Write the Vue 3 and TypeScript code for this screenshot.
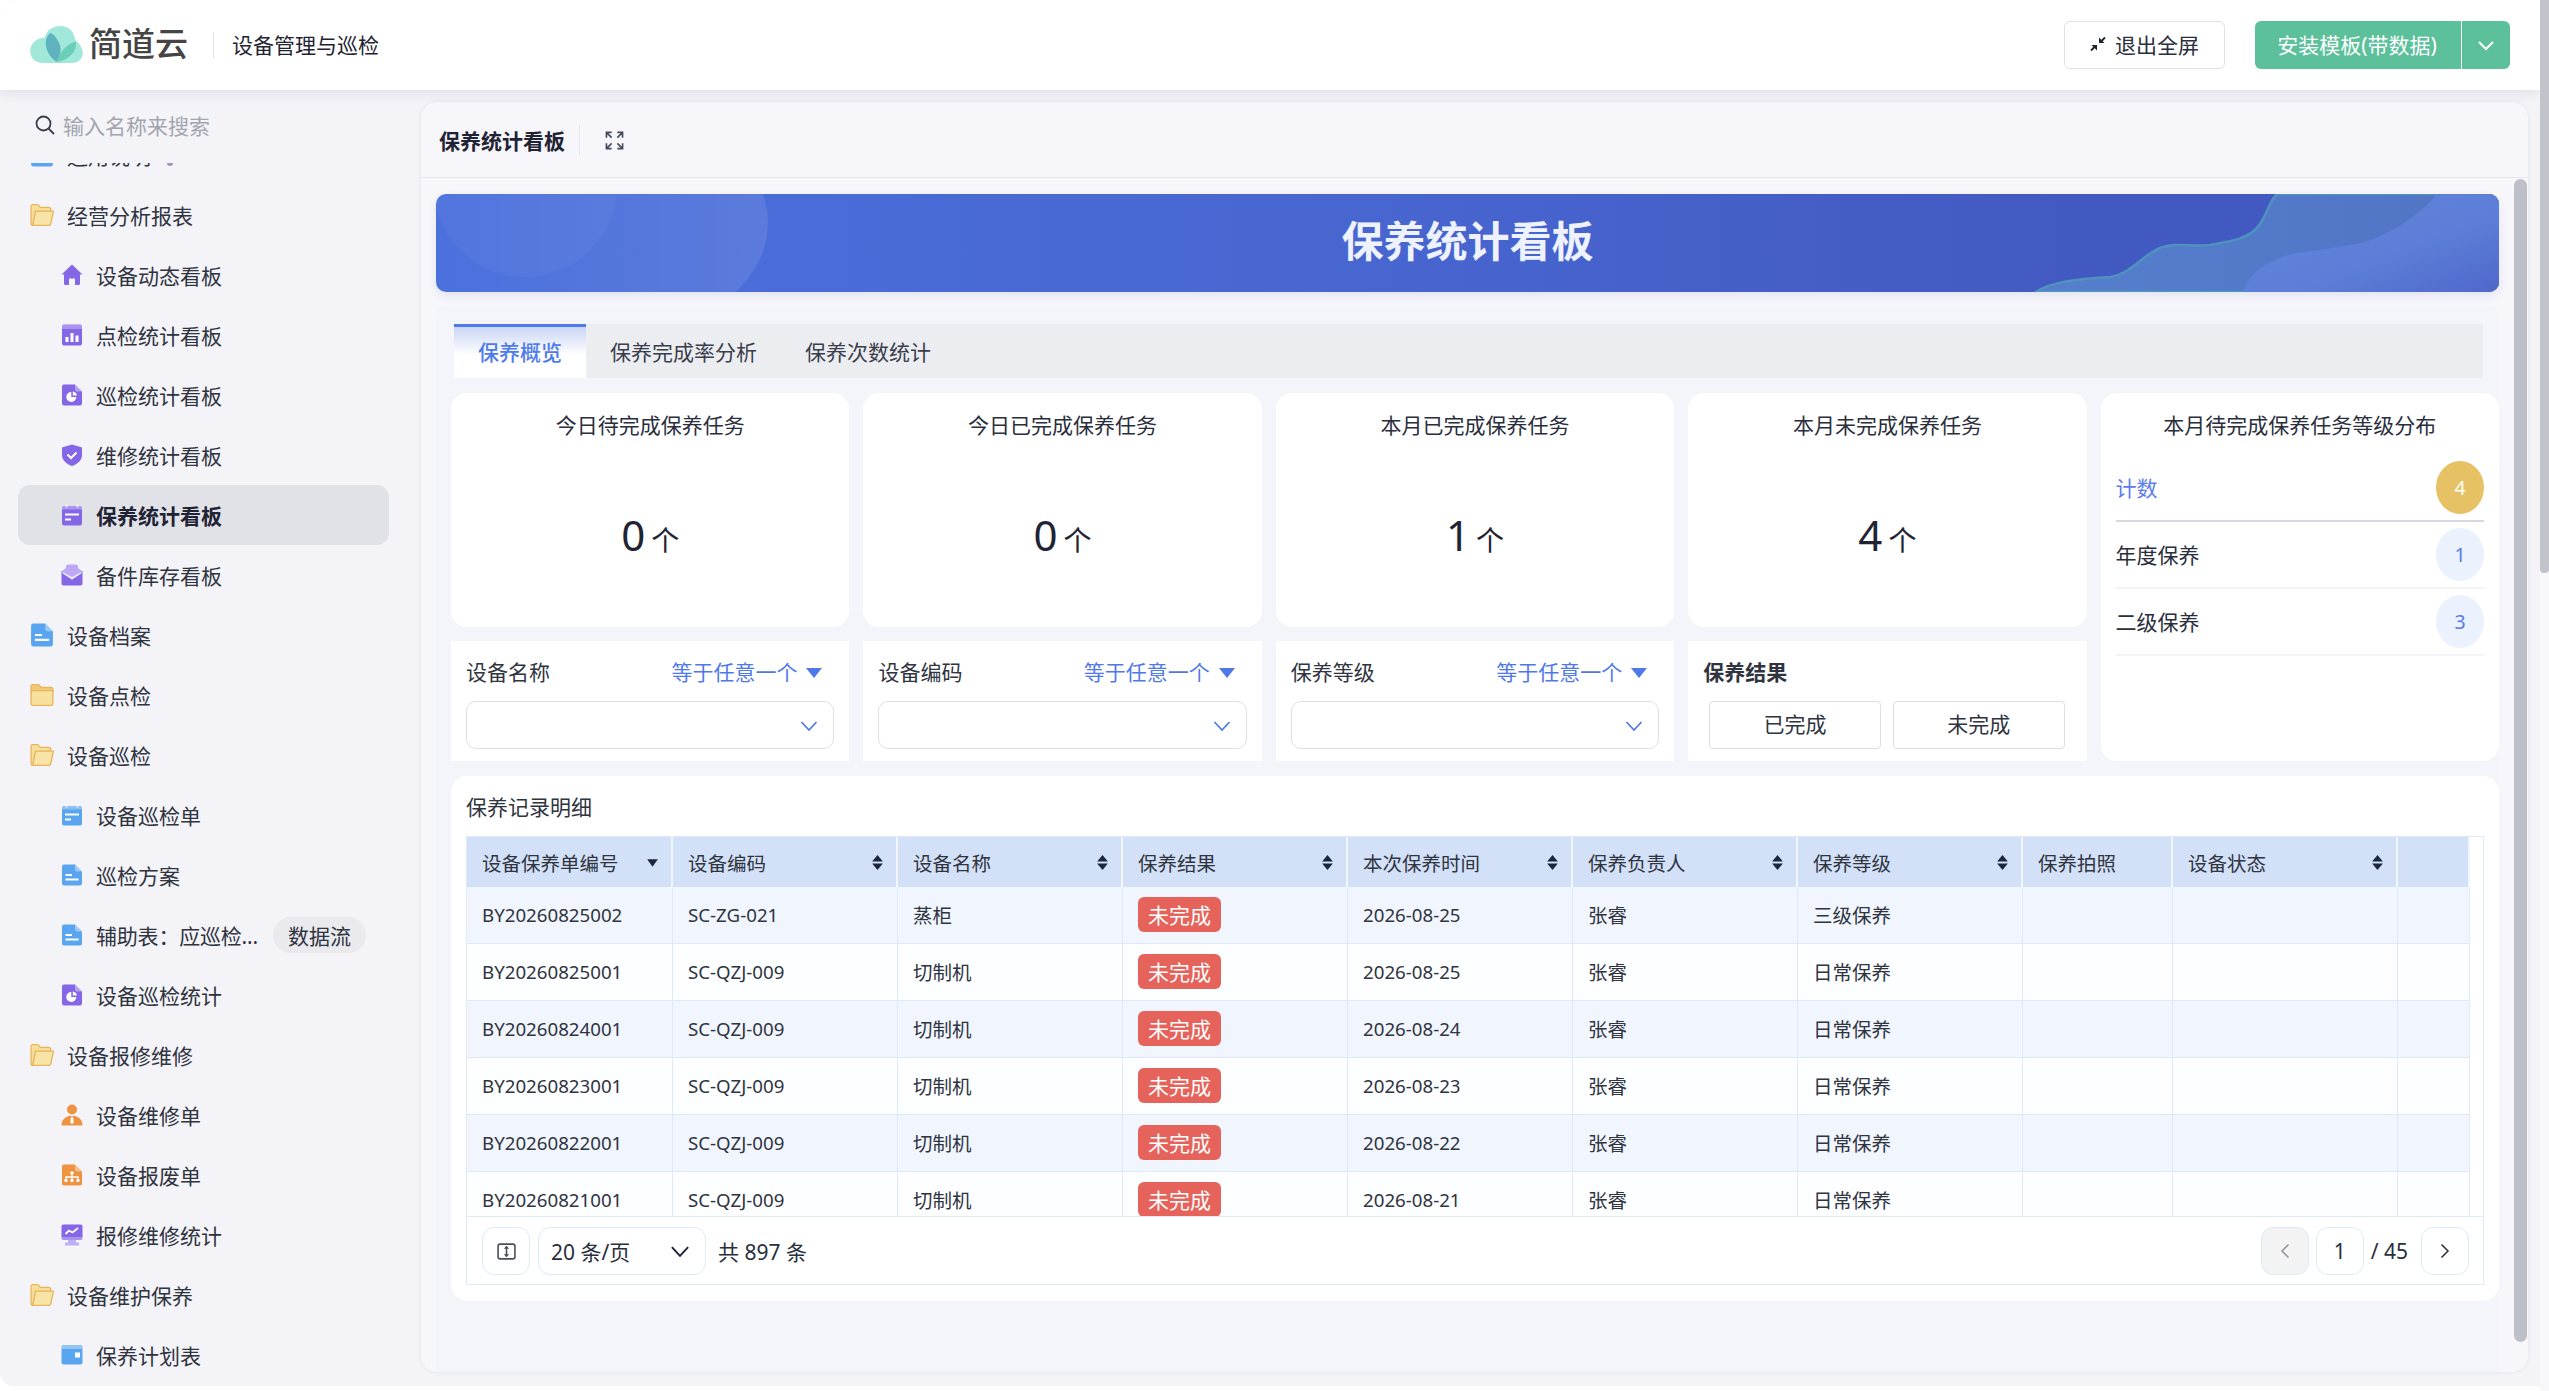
<template>
  <div class="app">
    <div class="shell">
      <header class="topbar">
        <div class="brand">
          <svg class="brand__logo" viewBox="0 0 54 40" aria-hidden="true">
            <path d="M13 39C5 39 0 33.500 0 27C0 19 6 13 15 13C17 5 23 1 31 1C39 1 45 6 46 15C50 18 54 23 54 29C54 35 49 39 43 39Z" fill="#a2e8da" />
            <path d="M27 38C20 33 16 26 16 18C16 14 18 10 21 8C26 11 29 16 31 22C32 28 30 33 27 38Z" fill="#5eb3be" />
            <path d="M28 38C30 29 36 20 47 17C48 27 41 35 28 38Z" fill="#69cfb6" />
          </svg>
          <span class="brand__name">简道云</span>
          <span class="brand__sep"></span>
          <span class="brand__app">设备管理与巡检</span>
        </div>
        <div class="topbar__actions">
          <button type="button" class="exit-btn">
            <svg viewBox="0 0 16 16" class="exit-btn__icon" aria-hidden="true">
              <path d="M15 1.500 10.500 6" stroke="#1f2333" stroke-width="1.800" fill="none" />
              <path d="M9 1.500V7H14.500Z" fill="#1f2333" />
              <path d="M1 14.500 5.500 10" stroke="#1f2333" stroke-width="1.800" fill="none" />
              <path d="M7 14.500V9H1.500Z" fill="#1f2333" />
            </svg>
            退出全屏
          </button>
          <div class="install">
            <button type="button" class="install__main">安装模板(带数据)</button>
            <button type="button" class="install__more">
              <svg viewBox="0 0 18 12" class="install__chev" aria-hidden="true">
                <path d="M2 2.500 9 9.500 16 2.500" fill="none" stroke="#fff" stroke-width="2" />
              </svg>
            </button>
          </div>
        </div>
      </header>

      <div class="layout">
        <aside class="sidebar">
          <div class="search">
            <svg viewBox="0 0 20 20" class="search__icon" aria-hidden="true">
              <circle cx="8.500" cy="8.500" r="7" fill="none" stroke="#3b3f4c" stroke-width="1.800" />
              <path d="M13.500 13.500 19 19" stroke="#3b3f4c" stroke-width="1.800" />
            </svg>
            <span class="search__text">输入名称来搜索</span>
          </div>
          <nav class="nav">
            <div class="nav__list">
              <div
                v-for="item in navItems"
                :key="item.label"
                class="nav__row"
                :class="{ 'nav__row--child': item.child, 'nav__row--active': item.active }"
              >
                <svg
                  class="nav__icon"
                  :class="`nav__icon--${item.tone}`"
                  viewBox="0 0 22 22"
                  aria-hidden="true"
                  v-html="icons[item.icon]"
                ></svg>
                <span class="nav__label" :class="{ 'nav__label--fixed': item.tag }">{{ item.label }}</span>
                <span v-if="item.dot" class="nav__dot"></span>
                <span v-if="item.tag" class="nav__tag">{{ item.tag }}</span>
              </div>
            </div>
          </nav>
        </aside>

        <main class="panel">
          <div class="panel__title">
            <span class="panel__name">保养统计看板</span>
            <span class="panel__sep"></span>
            <svg viewBox="0 0 20 20" class="panel__expand" aria-hidden="true">
              <path
                d="M7 1.500H1.500V7M1.500 1.500 7 7M13 1.500H18.500V7M18.500 1.500 13 7M7 18.500H1.500V13M1.500 18.500 7 13M13 18.500H18.500V13M18.500 18.500 13 13"
                fill="none"
                stroke="#444a5a"
                stroke-width="1.700"
              />
            </svg>
          </div>

          <div class="panel__body">
            <div class="banner">
              <svg class="banner__art" viewBox="0 0 2063 98" preserveAspectRatio="none" aria-hidden="true">
                <defs>
                  <linearGradient id="fade" x1="0" x2="1" y1="0" y2="0">
                    <stop offset="0" stop-color="#fff" stop-opacity="0" />
                    <stop offset="1" stop-color="#fff" stop-opacity="0.1" />
                  </linearGradient>
                  <linearGradient id="wave-a" x1="0" x2="1" y1="0" y2="0">
                    <stop offset="0" stop-color="#557fcc" />
                    <stop offset="1" stop-color="#5074c4" />
                  </linearGradient>
                  <linearGradient id="wave-b" x1="0" x2="1" y1="0" y2="1">
                    <stop offset="0" stop-color="#6286da" />
                    <stop offset="0.6" stop-color="#5c7ed8" />
                    <stop offset="1" stop-color="#4f68ca" />
                  </linearGradient>
                </defs>
                <ellipse cx="154" cy="29" rx="178" ry="120" fill="url(#fade)" />
                <circle cx="89" cy="-9" r="92" fill="#fff" fill-opacity="0.035" />
                <path
                  d="M1600 98C1615 88 1640 85 1674 83C1695 80 1705 62 1724 54C1740 48 1755 53 1774 51C1795 47 1810 45 1820 35C1832 22 1832 8 1841 0L2063 0L2063 98Z"
                  fill="url(#wave-a)"
                  stroke="#4f92c0"
                  stroke-width="2.500"
                />
                <path
                  d="M1808 98C1812 85 1818 74 1846 63C1870 56 1880 57 1896 54C1915 51 1930 49 1942 43C1960 35 1985 20 2001 0L2063 0L2063 98Z"
                  fill="url(#wave-b)"
                />
              </svg>
              <span class="banner__title">保养统计看板</span>
            </div>

            <section class="board">
              <div class="tabs">
                <div
                  v-for="(tab, i) in tabs"
                  :key="tab"
                  class="tabs__item"
                  :class="{ 'tabs__item--active': i === 0 }"
                >
                  {{ tab }}
                </div>
              </div>

              <div class="grid">
                <div v-for="stat in stats" :key="stat.title" class="stat">
                  <div class="stat__title">{{ stat.title }}</div>
                  <div class="stat__value">
                    <span class="stat__num">{{ stat.value }}</span>
                    <span class="stat__unit">个</span>
                  </div>
                </div>

                <div class="levels">
                  <div class="stat__title">本月待完成保养任务等级分布</div>
                  <div class="levels__list">
                    <div
                      v-for="(level, i) in levels"
                      :key="level.name"
                      class="levels__row"
                      :class="{ 'levels__row--head': i === 0 }"
                    >
                      <span class="levels__name">{{ level.name }}</span>
                      <span class="levels__count">{{ level.count }}</span>
                    </div>
                  </div>
                </div>

                <div v-for="name in filters" :key="name" class="filter">
                  <div class="filter__head">
                    <span>{{ name }}</span>
                    <span class="filter__mode">
                      等于任意一个
                      <svg viewBox="0 0 16 12" class="filter__caret" aria-hidden="true">
                        <path d="M0 1H16L8 11Z" fill="#4f79ea" />
                      </svg>
                    </span>
                  </div>
                  <div class="filter__input">
                    <svg viewBox="0 0 18 12" class="filter__chev" aria-hidden="true">
                      <path d="M1.500 2 9 10 16.500 2" fill="none" stroke="#4f79ea" stroke-width="1.700" />
                    </svg>
                  </div>
                </div>

                <div class="filter">
                  <div class="filter__head filter__head--bold">保养结果</div>
                  <div class="filter__options">
                    <button type="button" class="filter__option">已完成</button>
                    <button type="button" class="filter__option">未完成</button>
                  </div>
                </div>
              </div>

              <div class="records">
                <div class="records__title">保养记录明细</div>
                <div class="table-box">
                  <div class="table-wrap">
                    <table class="table">
                      <colgroup>
                        <col v-for="col in columns" :key="col.title" :class="`col-${col.width}`" />
                        <col class="col-end" />
                      </colgroup>
                      <thead>
                        <tr>
                          <th v-for="col in columns" :key="col.title">
                            <div class="table__head">
                              <span>{{ col.title }}</span>
                              <svg v-if="col.sort" viewBox="0 0 10 14" class="table__sort" aria-hidden="true">
                                <path v-if="col.sort === 'both'" d="M5 0 10 6H0Z" fill="#1d2540" />
                                <path v-if="col.sort === 'both'" d="M5 14 10 8H0Z" fill="#1d2540" />
                                <path v-if="col.sort === 'down'" d="M5 11 10 4H0Z" fill="#1d2540" />
                              </svg>
                            </div>
                          </th>
                          <th></th>
                        </tr>
                      </thead>
                      <tbody>
                        <tr v-for="row in rows" :key="row.no">
                          <td class="table__latin">{{ row.no }}</td>
                          <td class="table__latin">{{ row.code }}</td>
                          <td>{{ row.name }}</td>
                          <td><span class="badge">未完成</span></td>
                          <td class="table__latin">{{ row.date }}</td>
                          <td>张睿</td>
                          <td>{{ row.level }}</td>
                          <td></td>
                          <td></td>
                          <td></td>
                        </tr>
                      </tbody>
                    </table>
                  </div>
                  <div class="pager">
                    <div class="pager__left">
                      <span class="pager__btn">
                        <svg viewBox="0 0 18 18" class="pager__density" aria-hidden="true">
                          <rect x="1" y="2" width="16" height="14" rx="2" fill="none" stroke="#4a4f5e" stroke-width="1.500" />
                          <path d="M9 4.500V13.500" stroke="#4a4f5e" stroke-width="1.500" />
                          <path d="M9 3.500 11.500 6.500H6.500ZM9 14.500 11.500 11.500H6.500Z" fill="#4a4f5e" />
                        </svg>
                      </span>
                      <span class="pager__size">
                        20 条/页
                        <svg viewBox="0 0 18 12" class="pager__chev" aria-hidden="true">
                          <path d="M1.500 2 9 10 16.500 2" fill="none" stroke="#1f2333" stroke-width="1.800" />
                        </svg>
                      </span>
                      <span class="pager__total">共 897 条</span>
                    </div>
                    <div class="pager__right">
                      <span class="pager__btn pager__btn--off">
                        <svg viewBox="0 0 10 16" class="pager__arrow" aria-hidden="true">
                          <path d="M8.500 1.500 2 8 8.500 14.500" fill="none" stroke="#8f929a" stroke-width="1.500" />
                        </svg>
                      </span>
                      <span class="pager__btn">1</span>
                      <span class="pager__count">/ 45</span>
                      <span class="pager__btn pager__btn--next">
                        <svg viewBox="0 0 10 16" class="pager__arrow" aria-hidden="true">
                          <path d="M1.500 1.500 8 8 1.500 14.500" fill="none" stroke="#2b2f3c" stroke-width="1.500" />
                        </svg>
                      </span>
                    </div>
                  </div>
                </div>
              </div>
            </section>
          </div>
          <span class="panel__thumb"></span>
        </main>
      </div>
    </div>
    <div class="page-bar"><span class="page-bar__thumb"></span></div>
  </div>
</template>

<script setup lang="ts">
type Tone = "folder" | "purple" | "blue" | "orange";

interface NavItem {
  label: string;
  icon: string;
  tone: Tone;
  child?: boolean;
  active?: boolean;
  tag?: string;
  dot?: boolean;
}

interface Column {
  title: string;
  width: number;
  sort?: "both" | "down";
}

// 文档形状，几个图标共用
const doc =
  '<path fill="currentColor" d="M3 .5H14L21 7.500V19.500A2 2 0 0 1 19 21.500H3A2 2 0 0 1 1 19.500V2.500A2 2 0 0 1 3 .5Z"/><path fill="#fff" fill-opacity=".4" d="M14 .5 21 7.500H16A2 2 0 0 1 14 5.500Z"/>';

const icons: Record<string, string> = {
  folderOpen:
    '<path fill="#f6df9b" stroke="#e8b55c" stroke-width="1.200" d="M1 19V3A1.500 1.500 0 0 1 2.500 1.500H7L9.500 4H17A2 2 0 0 1 19 6V8H5.500L2.500 20.500H2.200A1.200 1.200 0 0 1 1 19Z"/><path fill="#f8e4a6" stroke="#e8b55c" stroke-width="1.200" d="M5 7.500H21.500L19 19A2 2 0 0 1 17 20.500H2.500Z"/>',
  folder:
    '<path fill="#efc878" stroke="#e8b55c" stroke-width="1.200" d="M1 6V3A1.500 1.500 0 0 1 2.500 1.500H8L10.500 4H19.500A1.500 1.500 0 0 1 21 5.500V8H1Z"/><path fill="#f7e09c" stroke="#e8b55c" stroke-width="1.200" d="M1 7H21V19A1.500 1.500 0 0 1 19.500 20.500H2.500A1.500 1.500 0 0 1 1 19Z"/>',
  home: '<path fill="currentColor" d="M11 .5 21.500 10.500H19V19.500A1.500 1.500 0 0 1 17.500 21H14V14.500H8V21H4.500A1.500 1.500 0 0 1 3 19.500V10.500H.5Z"/>',
  chart:
    '<rect x="1" y=".5" width="20" height="21" rx="2" fill="currentColor"/><path fill="#fff" fill-opacity=".3" d="M3 .5H19A2 2 0 0 1 21 2.500V5H1V2.500A2 2 0 0 1 3 .5Z"/><path fill="#fff" d="M4.500 13H7.500V18H4.500ZM9.500 9H12.500V18H9.500ZM14.500 11.500H17.500V18H14.500Z"/>',
  pie:
    doc +
    '<path fill="#fff" d="M10.300 8V13H15.300A5 5 0 1 1 10.300 8Z"/><path fill="#fff" d="M11.800 7.500A5 5 0 0 1 16 11.500H11.800Z"/>',
  shield:
    '<path fill="currentColor" d="M11 .5 21 3.500V11C21 16.500 16.500 20 11 22C5.500 20 1 16.500 1 11V3.500Z"/><path fill="none" stroke="#fff" stroke-width="2" d="M6.500 10.500 10 14 15.500 8.500"/>',
  calendar:
    '<rect x="1" y="2" width="20" height="19.500" rx="2" fill="currentColor"/><path fill="#fff" fill-opacity=".3" d="M3 2H19A2 2 0 0 1 21 4V5.500H1V4A2 2 0 0 1 3 2Z"/><path fill="#fff" fill-opacity=".55" d="M4.500 0H6.500V4H4.500ZM15.500 0H17.500V4H15.500Z"/><path fill="#fff" d="M4 9.500H18V11.500H4ZM4 14.500H10V16.500H4Z"/>',
  box:
    '<path fill="#bda8f5" d="M7 .5H15A2 2 0 0 1 17 2.500V4L21.500 7.500 11 13 .5 7.500 5 4V2.500A2 2 0 0 1 7 .5Z"/><path fill="currentColor" d="M.5 7 11 14 21.500 7V19.500A2 2 0 0 1 19.500 21.500H2.500A2 2 0 0 1 .5 19.500Z"/><path fill="none" stroke="#fff" stroke-width="1.300" d="M1.500 8.500 11 14.800 20.500 8.500"/>',
  doc: doc + '<path fill="#fff" d="M4.500 10H11V12H4.500ZM4.500 14.500H17.500V16.500H4.500Z"/>',
  person:
    '<circle cx="11" cy="5.500" r="5" fill="currentColor"/><path fill="currentColor" d="M.5 21.500C.5 16 4 13 8 12H14C18 13 21.500 16 21.500 21.500Z"/><path fill="#fff" d="M10 13H12L12.800 18.500 11 20 9.200 18.500Z"/>',
  org:
    doc +
    '<circle cx="11" cy="9" r="1.800" fill="#fff"/><path fill="none" stroke="#fff" stroke-width="1.300" d="M11 10V16M5 16V13H17V16"/><circle cx="5" cy="16.500" r="1.700" fill="#fff"/><circle cx="11" cy="16.500" r="1.700" fill="#fff"/><circle cx="17" cy="16.500" r="1.700" fill="#fff"/>',
  monitor:
    '<path fill="#c0aef6" d="M7 15H15V18.500H18V21.500H4V18.500H7Z"/><rect x=".5" y=".5" width="21" height="15.500" rx="2" fill="currentColor"/><path fill="#fff" fill-opacity=".3" d="M.5 13H21.500V14A2 2 0 0 1 19.500 16H2.500A2 2 0 0 1 .5 14Z"/><path fill="none" stroke="#fff" stroke-width="1.800" d="M4.500 10 8 6.500 11.500 8.500 17 4"/>',
  card:
    '<rect x=".5" y="1" width="21" height="19.500" rx="2" fill="currentColor"/><path fill="#fff" fill-opacity=".35" d="M2.500 1H19.500A2 2 0 0 1 21.500 3V5H.5V3A2 2 0 0 1 2.500 1Z"/><rect x="14" y="8.500" width="5" height="5" fill="#fff"/>',
};

const navItems: NavItem[] = [
  { label: "运用说明", icon: "doc", tone: "blue", dot: true },
  { label: "经营分析报表", icon: "folderOpen", tone: "folder" },
  { label: "设备动态看板", icon: "home", tone: "purple", child: true },
  { label: "点检统计看板", icon: "chart", tone: "purple", child: true },
  { label: "巡检统计看板", icon: "pie", tone: "purple", child: true },
  { label: "维修统计看板", icon: "shield", tone: "purple", child: true },
  { label: "保养统计看板", icon: "calendar", tone: "purple", child: true, active: true },
  { label: "备件库存看板", icon: "box", tone: "purple", child: true },
  { label: "设备档案", icon: "doc", tone: "blue" },
  { label: "设备点检", icon: "folder", tone: "folder" },
  { label: "设备巡检", icon: "folderOpen", tone: "folder" },
  { label: "设备巡检单", icon: "calendar", tone: "blue", child: true },
  { label: "巡检方案", icon: "doc", tone: "blue", child: true },
  { label: "辅助表：应巡检...", icon: "doc", tone: "blue", child: true, tag: "数据流" },
  { label: "设备巡检统计", icon: "pie", tone: "purple", child: true },
  { label: "设备报修维修", icon: "folderOpen", tone: "folder" },
  { label: "设备维修单", icon: "person", tone: "orange", child: true },
  { label: "设备报废单", icon: "org", tone: "orange", child: true },
  { label: "报修维修统计", icon: "monitor", tone: "purple", child: true },
  { label: "设备维护保养", icon: "folderOpen", tone: "folder" },
  { label: "保养计划表", icon: "card", tone: "blue", child: true },
];

const tabs = ["保养概览", "保养完成率分析", "保养次数统计"];

const stats = [
  { title: "今日待完成保养任务", value: 0 },
  { title: "今日已完成保养任务", value: 0 },
  { title: "本月已完成保养任务", value: 1 },
  { title: "本月未完成保养任务", value: 4 },
];

const levels = [
  { name: "计数", count: 4 },
  { name: "年度保养", count: 1 },
  { name: "二级保养", count: 3 },
];

const filters = ["设备名称", "设备编码", "保养等级"];

const columns: Column[] = [
  { title: "设备保养单编号", width: 206, sort: "down" },
  { title: "设备编码", width: 225, sort: "both" },
  { title: "设备名称", width: 225, sort: "both" },
  { title: "保养结果", width: 225, sort: "both" },
  { title: "本次保养时间", width: 225, sort: "both" },
  { title: "保养负责人", width: 225, sort: "both" },
  { title: "保养等级", width: 225, sort: "both" },
  { title: "保养拍照", width: 150 },
  { title: "设备状态", width: 225, sort: "both" },
];

const rows = [
  { no: "BY20260825002", code: "SC-ZG-021", name: "蒸柜", date: "2026-08-25", level: "三级保养" },
  { no: "BY20260825001", code: "SC-QZJ-009", name: "切制机", date: "2026-08-25", level: "日常保养" },
  { no: "BY20260824001", code: "SC-QZJ-009", name: "切制机", date: "2026-08-24", level: "日常保养" },
  { no: "BY20260823001", code: "SC-QZJ-009", name: "切制机", date: "2026-08-23", level: "日常保养" },
  { no: "BY20260822001", code: "SC-QZJ-009", name: "切制机", date: "2026-08-22", level: "日常保养" },
  { no: "BY20260821001", code: "SC-QZJ-009", name: "切制机", date: "2026-08-21", level: "日常保养" },
];
</script>

<style>
html,
body {
  margin: 0;
  background: #fff;
}
</style>

<style scoped>
.app {
  width: 2549px;
  height: 1391px;
  display: flex;
  overflow: hidden;
  background: #fff;
  color: #2a2e3d;
  font-family: "Noto Sans", "Noto Sans CJK SC", sans-serif;
  font-size: 21px;
}

.shell {
  width: 2540px;
  height: 1386px;
  display: flex;
  flex-direction: column;
  background: #f3f3f8;
  border-radius: 14px 0 0 14px;
  overflow: hidden;
}

/* 右侧页面滚动条 */
.page-bar {
  width: 9px;
  height: 1391px;
  background: #f8f8fa;
}

.page-bar__thumb {
  display: block;
  height: 573px;
  background: #c1c3cb;
  border-radius: 0 0 4px 4px;
}

/* 顶栏 */
.topbar {
  height: 90px;
  flex: none;
  display: flex;
  align-items: center;
  justify-content: space-between;
  padding: 0 30px 0 30px;
  background: #fff;
  box-shadow: 0 2px 14px rgba(30, 35, 60, 0.1);
  position: relative;
  z-index: 2;
}

.brand {
  display: flex;
  align-items: center;
}

.brand__logo {
  width: 53px;
  height: 39px;
  margin-top: -1px;
}

.brand__name {
  margin-left: 6px;
  width: 104px;
  font-size: 33px;
  line-height: 40px;
  font-weight: 500;
  color: #454545;
  padding-bottom: 2px;
}

.brand__sep {
  width: 1px;
  height: 26px;
  margin: 0 18px 0 20px;
  background: #e4e4e8;
}

.brand__app {
  color: #1f2333;
  padding-bottom: 3px;
}

.topbar__actions {
  display: flex;
  align-items: center;
  gap: 30px;
}

.exit-btn {
  width: 161px;
  height: 48px;
  display: flex;
  align-items: center;
  justify-content: center;
  gap: 9px;
  padding: 0 0 3px;
  background: #fff;
  border: 1px solid #e1e1e6;
  border-radius: 6px;
  color: #2a2e3d;
  font: inherit;
}

.exit-btn__icon {
  width: 16px;
  height: 16px;
}

.install {
  display: flex;
  height: 48px;
  border-radius: 6px;
  overflow: hidden;
  background: #5cc09b;
}

.install__main,
.install__more {
  border: none;
  background: transparent;
  color: #fff;
  font: inherit;
  padding: 0;
}

.install__main {
  width: 206px;
  padding: 0 2px 2px 0;
}

.install__more {
  width: 49px;
  border-left: 1px solid #fff;
  display: flex;
  align-items: center;
  justify-content: center;
}

.install__chev {
  width: 18px;
  height: 13px;
}

.layout {
  flex: 1;
  display: flex;
  min-height: 0;
}

/* 侧栏 */
.sidebar {
  width: 421px;
  flex: none;
  display: flex;
  flex-direction: column;
  min-height: 0;
}

.search {
  height: 73px;
  flex: none;
  box-sizing: border-box;
  display: flex;
  align-items: center;
  gap: 8px;
  padding: 0 0 4px 35px;
}

.search__icon {
  width: 20px;
  height: 20px;
}

.search__text {
  color: #a3a5ae;
}

.nav {
  flex: 1;
  overflow: hidden;
  min-height: 0;
}

.nav__list {
  margin-top: -38px;
}

.nav__row {
  height: 60px;
  display: flex;
  align-items: center;
  margin: 0 32px 0 18px;
  padding-left: 12px;
  border-radius: 12px;
  color: #30343f;
}

.nav__row--child {
  padding-left: 43px;
}

.nav__row--active {
  background: #e1e2e8;
  font-weight: 700;
  color: #1f2333;
}

.nav__icon {
  width: 24px;
  height: 24px;
  flex: none;
  margin-right: 13px;
}

.nav__row--child .nav__icon {
  width: 22px;
  height: 22px;
  margin-right: 13px;
}

.nav__icon--purple {
  color: #8566e6;
}

.nav__icon--blue {
  color: #5aa5f0;
}

.nav__icon--orange {
  color: #ee9440;
}

.nav__label {
  white-space: nowrap;
  padding-bottom: 1px;
}

.nav__label--fixed {
  width: 162px;
  letter-spacing: -0.2px;
}

.nav__dot {
  width: 6px;
  height: 10px;
  margin: 12px 0 0 16px;
  background: #a98fb5;
  border-radius: 3px;
}

.nav__tag {
  margin-left: 15px;
  width: 93px;
  height: 36px;
  display: flex;
  align-items: center;
  justify-content: center;
  background: #e9e9ee;
  border-radius: 18px;
}

/* 主面板 */
.panel {
  position: relative;
  width: 2107px;
  height: 1270px;
  margin-top: 12px;
  display: flex;
  flex-direction: column;
  background: #f6f6fb;
  border-radius: 16px;
  box-shadow: 0 0 4px rgba(30, 35, 60, 0.08);
  overflow: hidden;
}

.panel__title {
  height: 76px;
  flex: none;
  box-sizing: border-box;
  display: flex;
  align-items: center;
  padding-left: 18px;
  border-bottom: 1px solid #e6e6ec;
}

.panel__name {
  font-weight: 700;
  color: #1f2333;
}

.panel__sep {
  width: 1px;
  height: 30px;
  margin: 0 25px 0 14px;
  background: #e6e6ec;
}

.panel__expand {
  width: 19px;
  height: 19px;
  margin-top: 2px;
}

.panel__thumb {
  position: absolute;
  top: 77px;
  left: 2093px;
  width: 13px;
  height: 1163px;
  background: #bec0c9;
  border-radius: 7px;
}

.panel__body {
  flex: 1;
  min-height: 0;
  padding: 16px 0 0 15px;
}

.banner {
  position: relative;
  width: 2063px;
  height: 98px;
  border-radius: 10px;
  overflow: hidden;
  display: flex;
  align-items: center;
  justify-content: center;
  background: linear-gradient(90deg, #4a70dd 0%, #4866d0 45%, #4359c2 80%);
  box-shadow: 0 4px 10px rgba(60, 80, 160, 0.1);
}

.banner__art {
  position: absolute;
  inset: 0;
  width: 100%;
  height: 100%;
}

.banner__title {
  position: relative;
  padding-bottom: 10px;
  color: #eef2ff;
  font-size: 42px;
  font-weight: 700;
  letter-spacing: 0;
}

.board {
  width: 2063px;
  height: 1080px;
  margin-top: 14px;
  box-sizing: border-box;
  padding: 18px 0 0 15px;
  background: #f4f5fa;
  border-radius: 10px 10px 0 0;
}

.tabs {
  width: 2029px;
  height: 54px;
  margin-left: 3px;
  display: flex;
  background: #ecedf1;
}

.tabs__item {
  box-sizing: border-box;
  height: 54px;
  padding: 0 24px 1px;
  display: flex;
  align-items: center;
  color: #3a3e4c;
}

.tabs__item--active {
  border-top: 3px solid #4f7bea;
  padding-bottom: 4px;
  background: linear-gradient(180deg, #c9d6f6 0%, #fff 55%);
  color: #4f7bea;
  font-weight: 500;
}

.grid {
  width: 2048px;
  margin-top: 15px;
  display: grid;
  grid-template-columns: repeat(5, 1fr);
  grid-template-rows: 234px 120px;
  gap: 14px;
}

.stat {
  background: #fff;
  border-radius: 16px;
  display: flex;
  flex-direction: column;
  align-items: center;
}

.stat__title {
  margin-top: 16px;
  line-height: 32px;
  text-align: center;
  color: #2a2e3d;
}

.stat__value {
  margin-top: 60px;
  display: flex;
  align-items: baseline;
  gap: 6px;
  color: #1f2333;
}

.stat__num {
  font-size: 42px;
  line-height: 68px;
}

.stat__unit {
  font-size: 28px;
}

.levels {
  grid-column: 5;
  grid-row: 1 / span 2;
  background: #fff;
  border-radius: 16px;
}

.levels__list {
  margin: 14px 15px 0 15px;
}

.levels__row {
  height: 67px;
  box-sizing: border-box;
  display: flex;
  align-items: center;
  justify-content: space-between;
  border-bottom: 2px solid #f4f4f7;
}

.levels__row--head {
  border-bottom-color: #d8d8e0;
  color: #4f7bea;
}

.levels__name {
  padding-bottom: 2px;
}

.levels__row--head .levels__name {
  color: #5a7cf0;
}

.levels__count {
  width: 48px;
  height: 53px;
  border-radius: 50%;
  display: flex;
  align-items: center;
  justify-content: center;
  background: #ecf1fe;
  color: #5a7ae8;
  font-size: 19.500px;
}

.levels__row--head .levels__count {
  background: #e6c265;
  color: #fff;
}

.filter {
  background: #fff;
  padding: 0 15px 0 15px;
}

.filter__head {
  height: 60px;
  display: flex;
  align-items: center;
  justify-content: space-between;
  color: #30343f;
}

.filter__head--bold {
  font-weight: 700;
}

.filter__mode {
  display: flex;
  align-items: center;
  gap: 9px;
  padding-right: 12px;
  color: #4f79ea;
}

.filter__caret {
  width: 16px;
  height: 12px;
  margin-top: 3px;
}

.filter__input {
  box-sizing: border-box;
  height: 48px;
  display: flex;
  align-items: center;
  justify-content: flex-end;
  padding: 2px 15px 0 0;
  background: #fff;
  border: 1px solid #e0e0e4;
  border-radius: 10px;
}

.filter__chev {
  width: 18px;
  height: 12px;
}

.filter__options {
  display: flex;
  gap: 12px;
  padding-left: 6px;
  padding-right: 7px;
}

.filter__option {
  flex: 1;
  height: 48px;
  padding: 0 0 5px;
  background: #fff;
  border: 1px solid #dfdfe3;
  border-radius: 4px;
  color: #30343f;
  font: inherit;
}

.records {
  width: 2048px;
  height: 525px;
  margin-top: 15px;
  box-sizing: border-box;
  padding: 0 15px 0 15px;
  background: #fff;
  border-radius: 16px;
}

.records__title {
  height: 60px;
  display: flex;
  align-items: center;
  color: #30343f;
  font-size: 21px;
}

.table-box {
  box-sizing: border-box;
  height: 449px;
  border: 1px solid #dfe9f8;
}

.table-wrap {
  height: 379px;
  overflow: hidden;
  border-bottom: 1px solid #dfe9f8;
}

.table {
  width: 2003px;
  table-layout: fixed;
  border-collapse: separate;
  border-spacing: 0;
  font-size: 19.500px;
  color: #30343f;
}

.col-206 {
  width: 206px;
}

.col-225 {
  width: 225px;
}

.col-150 {
  width: 150px;
}

.col-end {
  width: 72px;
}

.table th {
  height: 50px;
  padding: 0 15px;
  background: #d2e1f8;
  border-right: 2px solid #f3f7fd;
  font-weight: 400;
  text-align: left;
}

.table__head {
  display: flex;
  align-items: center;
  justify-content: space-between;
  margin-right: -2px;
}

.table__sort {
  width: 11px;
  height: 15px;
  flex: none;
}

.table td {
  box-sizing: border-box;
  height: 57px;
  padding: 0 15px 2px;
  border-right: 1px solid #e0e9f7;
  border-bottom: 1px solid #dfe9f8;
  white-space: nowrap;
}

.table td.table__latin {
  font-size: 18.700px;
}

.table tbody tr:nth-child(odd) td {
  background: #f1f6fe;
}

.table tbody tr:nth-child(even) td {
  background: #fdfeff;
}

.badge {
  display: inline-flex;
  align-items: center;
  justify-content: center;
  width: 83px;
  height: 35px;
  vertical-align: middle;
  background: #e5635a;
  border-radius: 6px;
  color: #fff;
  font-size: 21px;
}

.pager {
  height: 68px;
  display: flex;
  align-items: center;
  justify-content: space-between;
  padding: 0 14px 0 15px;
}

.pager__left,
.pager__right {
  display: flex;
  align-items: center;
}

.pager__btn {
  box-sizing: border-box;
  width: 48px;
  height: 48px;
  display: flex;
  align-items: center;
  justify-content: center;
  border: 1px solid #dfe9f8;
  border-radius: 12px;
  background: #fff;
  margin-right: 7px;
}

.pager__btn--off {
  background: #f3f3f3;
}

.pager__btn--next {
  margin-right: 0;
}

.pager__density {
  width: 19px;
  height: 19px;
}

.pager__size {
  box-sizing: border-box;
  width: 168px;
  height: 48px;
  margin-left: 1px;
  padding: 0 15px 0 12px;
  display: flex;
  align-items: center;
  justify-content: space-between;
  border: 1px solid #dfe9f8;
  border-radius: 12px;
}

.pager__chev {
  width: 20px;
  height: 13px;
}

.pager__total {
  margin-left: 12px;
}

.pager__arrow {
  width: 10px;
  height: 16px;
}

.pager__count {
  margin: 0 13px 0 0;
}
</style>
